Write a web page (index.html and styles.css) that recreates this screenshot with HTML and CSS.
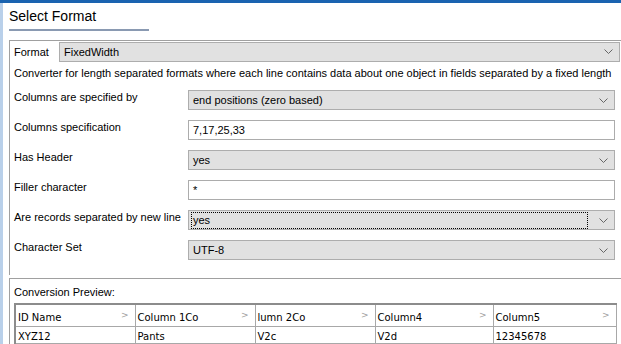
FILE: index.html
```html
<!DOCTYPE html>
<html>
<head>
	<meta charset="utf-8">
	<title>Select Format</title>
	<link rel="stylesheet" href="styles.css">
</head>
<body>
<div class="topbar"></div>
<div class="shell">
	<div class="strip"></div>
	<main class="main">
		<h1 class="title">Select Format</h1>

		<section class="frame">
			<div class="format-row">
				<span class="format-label">Format</span>
				<div class="combo combo-wide">
					<span class="combo-text">FixedWidth</span>
					<svg class="chev" width="9" height="5" viewBox="0 0 9 5"><polyline points="0.5,0.5 4.5,4.5 8.5,0.5" fill="none" stroke="#666" stroke-width="1"/></svg>
				</div>
			</div>
			<p class="desc">Converter for length separated formats where each line contains data about one object in fields separated by a fixed length</p>

			<div class="fields">
				<label class="lbl">Columns are specified by</label>
				<div class="combo">
					<span class="combo-text">end positions (zero based)</span>
					<svg class="chev" width="9" height="5" viewBox="0 0 9 5"><polyline points="0.5,0.5 4.5,4.5 8.5,0.5" fill="none" stroke="#666" stroke-width="1"/></svg>
				</div>

				<label class="lbl">Columns specification</label>
				<div class="input">7,17,25,33</div>

				<label class="lbl">Has Header</label>
				<div class="combo">
					<span class="combo-text">yes</span>
					<svg class="chev" width="9" height="5" viewBox="0 0 9 5"><polyline points="0.5,0.5 4.5,4.5 8.5,0.5" fill="none" stroke="#666" stroke-width="1"/></svg>
				</div>

				<label class="lbl">Filler character</label>
				<div class="input">*</div>

				<label class="lbl">Are records separated by new line</label>
				<div class="combo">
					<span class="combo-text focus">yes</span>
					<svg class="chev" width="9" height="5" viewBox="0 0 9 5"><polyline points="0.5,0.5 4.5,4.5 8.5,0.5" fill="none" stroke="#666" stroke-width="1"/></svg>
				</div>

				<label class="lbl">Character Set</label>
				<div class="combo">
					<span class="combo-text">UTF-8</span>
					<svg class="chev" width="9" height="5" viewBox="0 0 9 5"><polyline points="0.5,0.5 4.5,4.5 8.5,0.5" fill="none" stroke="#666" stroke-width="1"/></svg>
				</div>
			</div>
		</section>

		<section class="preview">
			<div class="preview-title">Conversion Preview:</div>
			<table class="grid">
				<colgroup>
					<col style="width:120px"><col style="width:120px"><col style="width:120px"><col style="width:118px"><col style="width:123px">
				</colgroup>
				<thead>
					<tr>
						<th>ID Name<span class="arr">&gt;</span></th>
						<th>Column 1Co<span class="arr">&gt;</span></th>
						<th>lumn 2Co<span class="arr">&gt;</span></th>
						<th>Column4<span class="arr">&gt;</span></th>
						<th>Column5<span class="arr">&gt;</span></th>
					</tr>
				</thead>
				<tbody>
					<tr>
						<td>XYZ12</td>
						<td>Pants</td>
						<td>V2c</td>
						<td>V2d</td>
						<td>12345678</td>
					</tr>
				</tbody>
			</table>
		</section>
	</main>
</div>
</body>
</html>
```

FILE: styles.css
```css
html, body { margin: 0; padding: 0; background: #fff; }
body { width: 621px; height: 344px; overflow: hidden; font-family: "Liberation Sans", Arial, sans-serif; font-size: 11px; color: #000; }

.topbar { height: 3px; background: #1a63b0; }
.shell { display: flex; height: 341px; }
.strip { width: 3px; background: #b9d0ea; flex: none; }
.main { flex: 1; min-width: 0; padding-left: 6px; }

.title { margin: 0; display: inline-block; width: 140px; padding: 3px 0; line-height: 20px; font-size: 14px; font-weight: normal; border-bottom: 2px solid #8a9ab2; }

.frame { margin-top: 9px; border-top: 1px solid #a0a0a0; border-left: 1px solid #a0a0a0; height: 234px; }
.format-row { display: flex; align-items: center; height: 21px; }
.format-label { width: 45px; padding-left: 4px; flex: none; }
.combo-wide { flex: 1; min-width: 0; margin-right: 1px; }

.desc { margin: 0; padding-left: 4px; height: 23px; line-height: 23px; white-space: nowrap; }

.fields { display: grid; grid-template-columns: 174px 427px; grid-auto-rows: 30px; align-items: center; padding-left: 4px; }
.lbl { margin-bottom: 6px; white-space: nowrap; }

.combo { height: 20px; box-sizing: border-box; border: 1px solid #adadad; background: #e1e1e1; display: flex; align-items: center; padding: 0 5px 0 4px; }
.combo-text { flex: 1; line-height: 14px; }
.combo-text.focus { outline: 1px dotted #000; outline-offset: 0; margin: 0 12px 0 -1px; padding-left: 1px; line-height: 15px; }
.chev { flex: none; margin-right: 1px; }

.input { height: 20px; box-sizing: border-box; border: 1px solid #acacac; background: #fff; padding-left: 4px; line-height: 18px; }

.preview { margin-top: 3px; border-top: 1px solid #a0a0a0; border-left: 1px solid #a0a0a0; padding-left: 4px; }
.preview-title { padding-top: 6px; line-height: 15px; height: 15px; }

.grid { margin-top: 3px; border-collapse: collapse; table-layout: fixed; width: 601px; font-family: "DejaVu Sans", Verdana, sans-serif; font-size: 10px; border-top: 2px solid #8c8c8c; border-left: 2px solid #8c8c8c; }
.grid th, .grid td { border: 1px solid #a8a8a8; text-align: left; font-weight: normal; padding: 0 0 0 2px; white-space: nowrap; overflow: hidden; }
.grid th { height: 18px; padding-top: 3px; position: relative; }
.grid td { height: 14px; padding-top: 2px; }
.arr { position: absolute; right: 6px; top: 5px; color: #a0a0a0; font-size: 9px; }
```
